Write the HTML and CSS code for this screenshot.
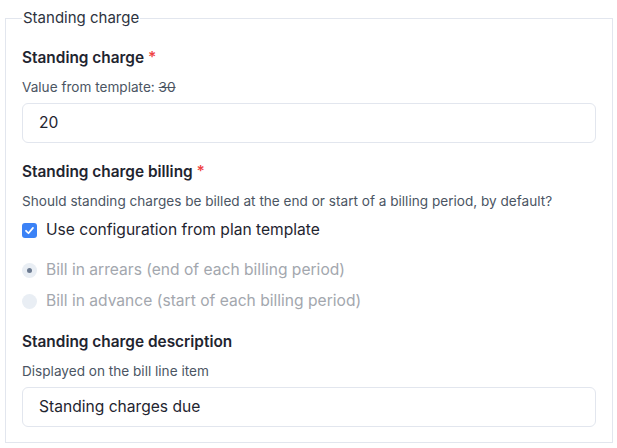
FILE: index.html
```html
<!DOCTYPE html>
<html>
<head>
<meta charset="utf-8">
<link rel="stylesheet" href="styles.css">
</head>
<body>
<fieldset class="panel">
  <legend class="panel-legend">Standing charge</legend>

  <div class="field">
    <div class="label">Standing charge <span class="req">*</span></div>
    <div class="help">Value from template: <s>30</s></div>
    <div class="input">20</div>
  </div>

  <div class="field">
    <div class="label">Standing charge billing <span class="req">*</span></div>
    <div class="help">Should standing charges be billed at the end or start of a billing period, by default?</div>
    <div class="check-row">
      <span class="checkbox">
        <svg width="11" height="11" viewBox="0 0 12 12"><path d="M2.2 6.3 L4.9 9 L9.8 3.2" fill="none" stroke="#fff" stroke-width="1.9" stroke-linecap="round" stroke-linejoin="round"/></svg>
      </span>
      <span class="check-text">Use configuration from plan template</span>
    </div>
    <div class="radios">
      <div class="radio-row">
        <span class="radio checked"><span class="dot"></span></span>
        <span class="radio-text">Bill in arrears (end of each billing period)</span>
      </div>
      <div class="radio-row">
        <span class="radio"></span>
        <span class="radio-text">Bill in advance (start of each billing period)</span>
      </div>
    </div>
  </div>

  <div class="field">
    <div class="label">Standing charge description</div>
    <div class="help">Displayed on the bill line item</div>
    <div class="input">Standing charges due</div>
  </div>
</fieldset>
</body>
</html>
```
FILE: styles.css
```css
html, body {
  margin: 0;
  padding: 0;
  background: #fff;
}
body {
  font-family: Inter, "Noto Sans", sans-serif;
  color: #1f2937;
  padding: 9px 4px 0 5px;
}
.panel {
  margin: 0;
  border: 1px solid #e2e6ee;
  padding: 21px 16px 15px 16px;
  display: flex;
  flex-direction: column;
  gap: 19px;
}
.panel-legend {
  padding: 0 1px;
  font-size: 15px;
  color: #2d3340;
  line-height: 18px;
}
.field {
  display: flex;
  flex-direction: column;
}
.label {
  font-size: 15.4px;
  font-weight: 600;
  line-height: 20px;
  color: #1f2530;
}
.req {
  color: #ef4444;
}
.help {
  font-size: 13.6px;
  color: #4b5563;
  line-height: 18px;
  margin-top: 10px;
}
.help s {
  color: #4b5563;
}
.input {
  margin-top: 7px;
  height: 38px;
  border: 1px solid #e2e6ee;
  border-radius: 6px;
  font-size: 15.6px;
  line-height: 38px;
  padding: 0 16px;
  color: #1f2530;
}
.check-row {
  display: flex;
  align-items: center;
  gap: 9px;
  margin-top: 10px;
}
.checkbox {
  width: 15px;
  height: 15px;
  border-radius: 3px;
  background: #3b82f6;
  display: flex;
  align-items: center;
  justify-content: center;
}
.check-text {
  font-size: 15.6px;
  line-height: 20px;
  color: #1f2530;
}
.radios {
  display: flex;
  flex-direction: column;
  gap: 11px;
  margin-top: 20px;
  margin-bottom: 2px;
}
.radio-row {
  display: flex;
  align-items: center;
  gap: 9px;
}
.radio {
  width: 15px;
  height: 15px;
  border-radius: 50%;
  background: #e9eef4;
  display: flex;
  align-items: center;
  justify-content: center;
}
.dot {
  width: 5px;
  height: 5px;
  border-radius: 50%;
  background: #6b7a90;
}
.radio-text {
  font-size: 15.6px;
  line-height: 20px;
  color: #a3a7ae;
}
```
